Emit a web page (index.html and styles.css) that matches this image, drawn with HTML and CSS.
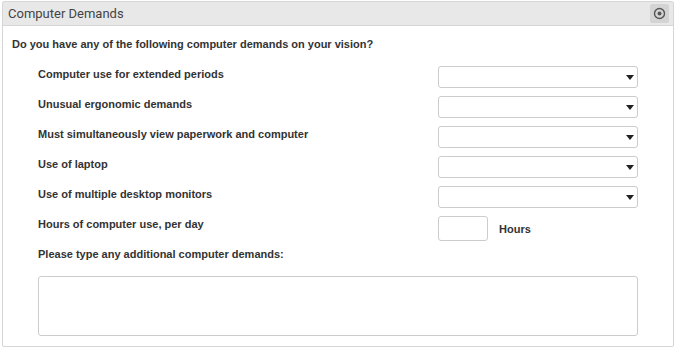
FILE: index.html
```html
<!DOCTYPE html>
<html lang="en">
  <head>
    <meta charset="UTF-8" />
    <title>Computer Demands</title>
    <link rel="stylesheet" href="styles.css">
  </head>
  <body>
    <div class="panel">
      <div class="panel-header">
        <span class="panel-title">Computer Demands</span>
        <button class="panel-toggle" type="button" aria-label="Toggle">
          <svg width="13" height="13" viewBox="0 0 13 13">
            <circle cx="6.5" cy="6.5" r="5" fill="none" stroke="#555" stroke-width="1.4" />
            <circle cx="6.5" cy="6.5" r="2" fill="#555" />
          </svg>
        </button>
      </div>

      <div class="panel-body">
        <div class="question">Do you have any of the following computer demands on your vision?</div>

        <div class="form-row">
          <label class="form-label">Computer use for extended periods</label>
          <div class="select-wrap"><select class="form-select"><option></option></select></div>
        </div>
        <div class="form-row">
          <label class="form-label">Unusual ergonomic demands</label>
          <div class="select-wrap"><select class="form-select"><option></option></select></div>
        </div>
        <div class="form-row">
          <label class="form-label">Must simultaneously view paperwork and computer</label>
          <div class="select-wrap"><select class="form-select"><option></option></select></div>
        </div>
        <div class="form-row">
          <label class="form-label">Use of laptop</label>
          <div class="select-wrap"><select class="form-select"><option></option></select></div>
        </div>
        <div class="form-row">
          <label class="form-label">Use of multiple desktop monitors</label>
          <div class="select-wrap"><select class="form-select"><option></option></select></div>
        </div>
        <div class="form-row">
          <label class="form-label">Hours of computer use, per day</label>
          <input class="hours-input" type="text" />
          <span class="hours-unit">Hours</span>
        </div>
        <div class="form-row">
          <label class="form-label">Please type any additional computer demands:</label>
        </div>

        <textarea class="notes"></textarea>
      </div>
    </div>
  </body>
</html>
```

FILE: styles.css
```css
body {
  margin: 0;
  padding: 1px 2px 2px;
  font-family: "Liberation Sans", Arial, sans-serif;
  color: #333;
  background-color: #fff;
}

.panel {
  width: 670px;
  border: 1px solid #d6d6d6;
  border-radius: 2px;
}

.panel-header {
  display: flex;
  align-items: center;
  justify-content: space-between;
  height: 23px;
  padding: 0 4px 0 5px;
  background-color: #e8e8e8;
  border-bottom: 1px solid #d6d6d6;
}

.panel-title {
  font-family: Roboto, "Liberation Sans", sans-serif;
  font-size: 13px;
  color: #444;
}

.panel-toggle {
  display: flex;
  align-items: center;
  justify-content: center;
  width: 19px;
  height: 19px;
  padding: 0;
  border: none;
  border-radius: 2px;
  background-color: #d4d4d4;
}

.panel-body {
  padding: 12px 35px 10px 9px;
}

.question {
  font-size: 11px;
  font-weight: bold;
  line-height: 13px;
  margin-bottom: 15px;
}

.form-row {
  display: flex;
  align-items: flex-start;
  height: 30px;
  margin-left: 26px;
}

.form-label {
  width: 400px;
  padding-top: 2px;
  font-size: 11px;
  font-weight: bold;
  line-height: 13px;
}

.select-wrap {
  position: relative;
  width: 200px;
}

.select-wrap::after {
  content: "";
  position: absolute;
  right: 4px;
  top: 9px;
  border-left: 4px solid transparent;
  border-right: 4px solid transparent;
  border-top: 5px solid #222;
  pointer-events: none;
}

.form-select {
  display: block;
  width: 200px;
  height: 22px;
  margin: 0;
  border: 1px solid #ccc;
  border-radius: 3px;
  background-color: #fff;
  appearance: none;
  -webkit-appearance: none;
}

.hours-input {
  width: 50px;
  height: 25px;
  margin: 0;
  padding: 0;
  box-sizing: border-box;
  border: 1px solid #ccc;
  border-radius: 3px;
}

.hours-unit {
  margin-left: 11px;
  padding-top: 7px;
  font-size: 11px;
  font-weight: bold;
}

.notes {
  display: block;
  width: 600px;
  height: 60px;
  margin: 0 0 0 26px;
  box-sizing: border-box;
  border: 1px solid #ccc;
  border-radius: 3px;
  resize: none;
}
```
